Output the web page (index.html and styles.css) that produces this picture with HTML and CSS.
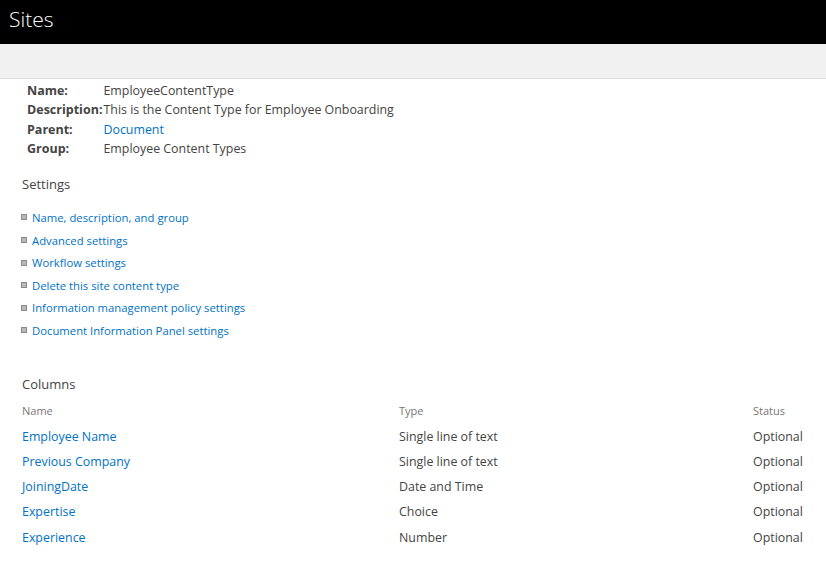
FILE: index.html
```html
<!DOCTYPE html>
<html>
<head>
<meta charset="utf-8">
<link rel="stylesheet" href="styles.css">
</head>
<body>
<div class="suitebar"><span class="sites">Sites</span></div>
<div class="ribbon"></div>
<div class="content">
  <div class="details">
    <div class="label">Name:</div><div class="value">EmployeeContentType</div>
    <div class="label">Description:</div><div class="value">This is the Content Type for Employee Onboarding</div>
    <div class="label">Parent:</div><div class="value"><a href="#">Document</a></div>
    <div class="label">Group:</div><div class="value">Employee Content Types</div>
  </div>
  <h2 class="section settings-h">Settings</h2>
  <ul class="links">
    <li><a href="#">Name, description, and group</a></li>
    <li><a href="#">Advanced settings</a></li>
    <li><a href="#">Workflow settings</a></li>
    <li><a href="#">Delete this site content type</a></li>
    <li><a href="#">Information management policy settings</a></li>
    <li><a href="#">Document Information Panel settings</a></li>
  </ul>
  <h2 class="section columns-h">Columns</h2>
  <div class="cols">
    <div class="th">Name</div><div class="th">Type</div><div class="th">Status</div>
    <div class="td"><a href="#">Employee Name</a></div><div class="td">Single line of text</div><div class="td">Optional</div>
    <div class="td"><a href="#">Previous Company</a></div><div class="td">Single line of text</div><div class="td">Optional</div>
    <div class="td"><a href="#">JoiningDate</a></div><div class="td">Date and Time</div><div class="td">Optional</div>
    <div class="td"><a href="#">Expertise</a></div><div class="td">Choice</div><div class="td">Optional</div>
    <div class="td"><a href="#">Experience</a></div><div class="td">Number</div><div class="td">Optional</div>
  </div>
</div>
</body>
</html>
```
FILE: styles.css
```css
html, body { margin: 0; padding: 0; background: #fff; }
body { font-family: "Open Sans", "Noto Sans", sans-serif; color: #444; font-size: 13px; }
a { color: #0072c6; text-decoration: none; }
.suitebar { height: 44px; background: #000; display: flex; align-items: center; padding-left: 9px; }
.sites { color: #fff; font-size: 21px; font-weight: 300; line-height: 24px; margin-top: -7px; }
.ribbon { height: 34px; background: #f1f1f1; border-bottom: 1px solid #dedede; }
.content { padding: 2px 0 0 22px; }
.details { display: grid; grid-template-columns: auto 1fr; column-gap: 1px; padding-left: 5px; }
.label { font-weight: 700; color: #444; line-height: 19.3px; font-size: 12.5px; }
.value { line-height: 19.3px; font-size: 12.4px; }
.section { font-size: 13px; font-weight: 400; margin: 0; color: #444; line-height: 18px; }
.settings-h { margin-top: 17px; }
.links { list-style: none; margin: 13px 0 0; padding: 0; }
.links li { display: flex; align-items: center; height: 22.6px; font-size: 11.3px; }
.links li::before { content: ""; width: 4px; height: 4px; background: #b8b8b8; border: 1px solid #8a8a8a; margin: 0 5px 0 -1px; }
.columns-h { margin-top: 33px; }
.cols { display: grid; grid-template-columns: 377px 354px auto; margin-top: 9px; }
.th { font-size: 11px; color: #777; line-height: 18px; padding-bottom: 4px; }
.td { font-size: 12.4px; line-height: 25.2px; color: #444; }
```
